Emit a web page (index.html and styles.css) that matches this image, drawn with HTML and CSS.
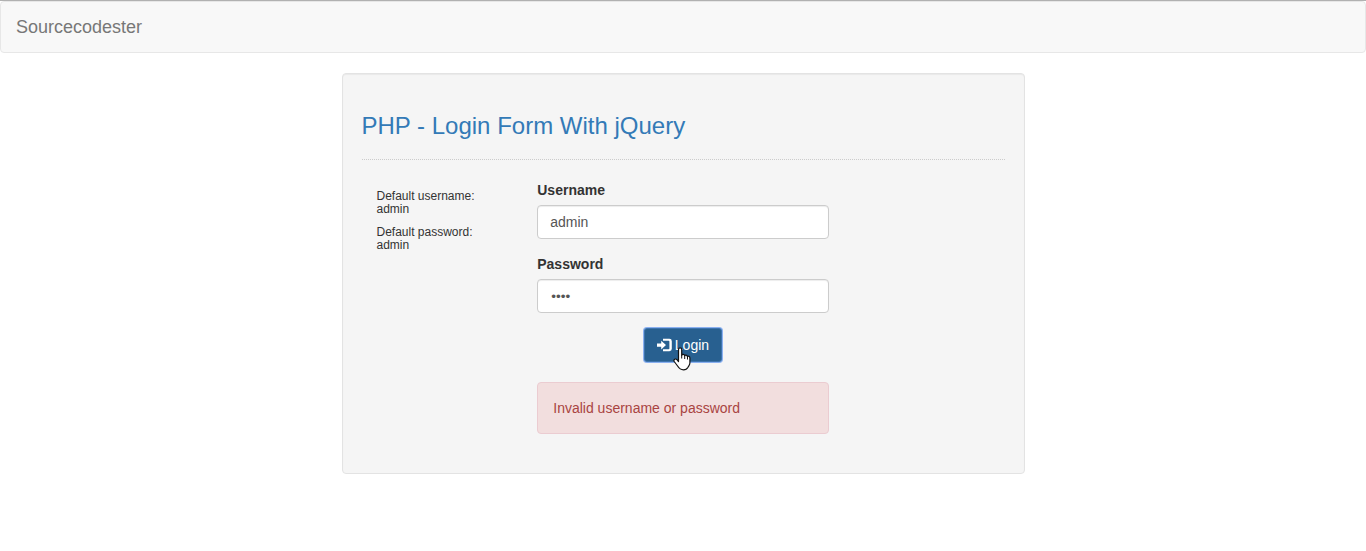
FILE: index.html
```html
<!DOCTYPE html>
<html lang="en">
<head>
<meta charset="utf-8">
<title>Login</title>
<link rel="stylesheet" href="styles.css">
</head>
<body>
<nav class="navbar"><a class="navbar-brand">Sourcecodester</a></nav>
<main class="well">
  <h3 class="title">PHP - Login Form With jQuery</h3>
  <hr class="divider">
  <div class="row">
    <aside class="hints">
      <h6 class="hint">Default username: admin</h6>
      <h6 class="hint">Default password: admin</h6>
    </aside>
    <form class="login">
      <div class="form-group">
        <label class="label" for="username">Username</label>
        <input class="form-control" id="username" type="text" value="admin">
      </div>
      <div class="form-group">
        <label class="label" for="password">Password</label>
        <input class="form-control password" id="password" type="password" value="1234">
      </div>
      <div class="actions">
        <button class="btn" type="button"><svg class="icon" viewBox="0 0 14 14" width="14" height="14"><path fill="currentColor" d="M0 5.5h4.2V2.8L9 7.1 4.2 11.4V8.7H0zM6 .8h6.4A2.4 2.4 0 0 1 14.8 3.200v7.600a2.400 2.400 0 0 1-2.400 2.400H6v-2h5.600a.8.8 0 0 0 .8-.8V3.600a.8.8 0 0 0-.8-.8H6z"/></svg> Login</button>
        <svg class="cursor" viewBox="0 0 18 24" width="18" height="24"><path fill="#fff" stroke="#111" stroke-width="1.2" stroke-linejoin="round" d="M5.500 14.500V2.500C5.500.3 8.700.3 8.700 2.500V8.200C9.100 6.900 11.500 7.100 11.700 8.700 12.200 7.700 14.200 8 14.400 9.700 15 8.700 16.900 9.100 16.900 11V16C16.900 18 15.500 19 15 20.200 14 22 12.400 22.800 10.500 22.800 7.600 22.800 5.800 21 4.600 19L1.200 14.500C.2 12.500 2.600 11.200 3.900 12.700Z"/><path fill="none" stroke="#111" d="M8.700 8v3.500M11.700 9v3M14.500 10v2.500"/></svg>
      </div>
      <div class="alert">Invalid username or password</div>
    </form>
  </div>
</main>
</body>
</html>
```
FILE: styles.css
```css
* { box-sizing: border-box; }
body {
  margin: 0;
  border-top: 1px solid #b1b1b1;
  background: #fff;
  color: #333;
  font: 14px/20px "Liberation Sans", Arial, sans-serif;
}
.navbar {
  height: 52px;
  margin-bottom: 20px;
  padding: 15px;
  border: 1px solid #e7e7e7;
  border-radius: 4px;
  background: #f8f8f8;
}
.navbar-brand { display: block; color: #777; font-size: 18px; }
.well {
  width: 683px;
  margin: 0 auto;
  padding: 19px;
  border: 1px solid #e3e3e3;
  border-radius: 4px;
  background: #f5f5f5;
  box-shadow: inset 0 1px 1px rgba(0, 0, 0, .05);
}
.title { margin: 20px 0; color: #337ab7; font-size: 24px; font-weight: 400; line-height: 1.1; }
.divider { margin: 0 0 20px; border: 0; border-top: 1px dotted #ccc; }
.row { display: flex; }
.hints { width: 25%; padding: 0 15px; }
.hint { margin: 10px 0; font-size: 12px; font-weight: 400; line-height: 13px; }
.login { width: 50%; padding: 0 15px; }
.form-group { margin-bottom: 15px; }
.label { display: block; margin-bottom: 5px; font-weight: 700; }
.form-control {
  display: block;
  width: 100%;
  height: 34px;
  padding: 6px 12px;
  border: 1px solid #ccc;
  border-radius: 4px;
  background: #fff;
  box-shadow: inset 0 1px 1px rgba(0, 0, 0, .075);
  color: #555;
  font: inherit;
}
.password { padding-left: 13px; font-size: 13.5px; }
.actions { display: flex; justify-content: center; position: relative; margin-bottom: 20px; }
.btn {
  height: 34px;
  padding: 6px 12px;
  border: 1px solid #3e74ad;
  border-radius: 3px;
  background: #286090;
  box-shadow: 0 0 0 1px #8ab0f0;
  color: #fff;
  font: inherit;
  white-space: nowrap;
}
.icon { position: relative; top: 2px; overflow: visible; }
.cursor { position: absolute; left: 136px; top: 19px; }
.alert {
  margin-bottom: 20px;
  padding: 15px;
  border: 1px solid #ebccd1;
  border-radius: 4px;
  background: #f2dede;
  color: #a94442;
}
```
